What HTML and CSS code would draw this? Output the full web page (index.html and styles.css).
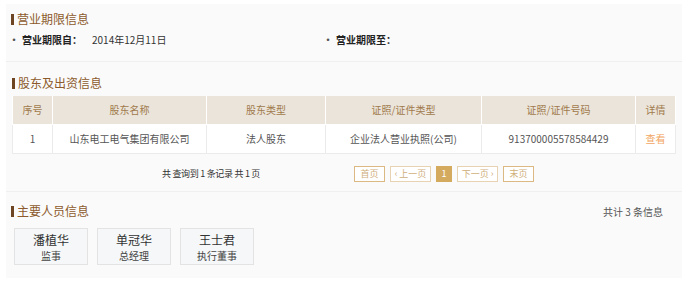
FILE: index.html
```html
<!DOCTYPE html>
<html lang="zh-CN">
<head>
<meta charset="utf-8">
<link rel="stylesheet" href="styles.css">
</head>
<body>
<div class="wrap">
  <section class="panel p1">
    <h3 class="title">营业期限信息</h3>
    <div class="kv">
      <div class="kv-item"><span class="dot">·</span><b>营业期限自：</b><span class="val">2014年12月11日</span></div>
      <div class="kv-item kv-right"><span class="dot">·</span><b>营业期限至：</b><span class="val"></span></div>
    </div>
  </section>
  <section class="panel p2">
    <h3 class="title">股东及出资信息</h3>
    <table class="tbl">
      <thead>
        <tr><th class="c1">序号</th><th class="c2">股东名称</th><th class="c3">股东类型</th><th class="c4">证照/证件类型</th><th class="c5">证照/证件号码</th><th class="c6">详情</th></tr>
      </thead>
      <tbody>
        <tr><td>1</td><td>山东电工电气集团有限公司</td><td>法人股东</td><td>企业法人营业执照(公司)</td><td>913700005578584429</td><td class="link">查看</td></tr>
      </tbody>
    </table>
    <div class="pager">
      <span class="count">共 查询到 1 条记录 共 1 页</span>
      <div class="btns">
        <span class="pb w1">首页</span>
        <span class="pb w2">‹ 上一页</span>
        <span class="pb cur">1</span>
        <span class="pb w2">下一页 ›</span>
        <span class="pb w1">末页</span>
      </div>
    </div>
  </section>
  <section class="panel p3">
    <div class="head3">
      <h3 class="title">主要人员信息</h3>
      <span class="total">共计 3 条信息</span>
    </div>
    <div class="cards">
      <div class="card"><div class="name">潘植华</div><div class="role">监事</div></div>
      <div class="card"><div class="name">单冠华</div><div class="role">总经理</div></div>
      <div class="card"><div class="name">王士君</div><div class="role">执行董事</div></div>
    </div>
  </section>
</div>
</body>
</html>
```
FILE: styles.css
```css
* { box-sizing: border-box; }
html, body { margin: 0; padding: 0; background: #fff; }
body {
  font-family: "Noto Sans CJK SC", "Noto Sans", "Liberation Sans", sans-serif;
  font-size: 10px;
  color: #333;
}
.wrap {
  width: 676px;
  margin: 4px 0 0 6px;
  display: flex;
  flex-direction: column;
  gap: 1px;
  background: #f0f0f0;
}
.panel { background: #fafafa; }
.p1 { height: 57px; padding: 7px 0 0 5px; }
.p2 { height: 129px; padding: 13px 0 0 6px; }
.p3 { height: 86px; padding: 11px 0 0 5px; }

.title {
  margin: 0;
  font-size: 12px;
  font-weight: normal;
  color: #8c5a2c;
  line-height: 16px;
  display: flex;
  align-items: center;
}
.title::before {
  content: "";
  display: inline-block;
  width: 3px;
  height: 11px;
  background: #6e4522;
  margin-right: 3px;
}
.kv { display: flex; margin-top: 6px; line-height: 14px; margin-left: -2px; }
.kv-item { display: flex; align-items: center; width: 314px; }
.kv-item .dot { color: #555; margin-right: 3px; font-weight: bold; }
.kv-item b { font-weight: bold; color: #222; font-size: 10px; }
.kv-item .val { margin-left: 10px; color: #333; }

.tbl {
  margin-top: 5px;
  border-collapse: collapse;
  width: 663px;
  table-layout: fixed;
  text-align: center;
}
.tbl th {
  background: #ebe4da;
  color: #a07a4c;
  font-weight: normal;
  height: 28px;
  border: 1px solid #fff;
  border-top: none;
  padding: 0;
}
.tbl td {
  background: #fff;
  color: #555;
  height: 29px;
  border: 1px solid #ebebeb;
  padding: 0;
}
.tbl .c1 { width: 40px; }
.tbl .c2 { width: 154px; }
.tbl .c3 { width: 119px; }
.tbl .c4 { width: 156px; }
.tbl .c5 { width: 154px; }
.tbl .c6 { width: 40px; }
.tbl td.link { color: #f2a661; }

.pager {
  display: flex;
  align-items: center;
  margin-top: 12px;
  height: 16px;
}
.count { margin-left: 150px; color: #333; width: 192px; font-size: 9px; letter-spacing: -0.3px; }
.btns { display: flex; gap: 5px; }
.pb {
  height: 16px;
  border: 1px solid #dcb982;
  color: #cfae7a;
  font-size: 9px;
  line-height: 14px;
  text-align: center;
  background: #fff;
}
.pb.w1 { width: 31px; }
.pb.w2 { width: 41px; border-color: #e7d3b2; }
.pb.cur { width: 16px; background: #d4aa5f; border-color: #d4aa5f; color: #fff; }

.head3 { display: flex; justify-content: space-between; align-items: center; padding-right: 19px; }
.total { color: #555; }
.cards { display: flex; gap: 9px; margin-top: 9px; padding-left: 3px; }
.card {
  width: 74px;
  height: 37px;
  border: 1px solid #e3e3e3;
  background: #f5f7f8;
  text-align: center;
  padding-top: 2px;
}
.card .name { font-size: 12px; color: #333; line-height: 17px; }
.card .role { font-size: 10px; color: #444; line-height: 15px; }
```
